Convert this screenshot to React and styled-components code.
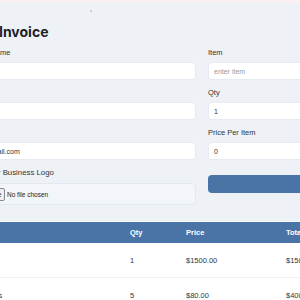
import styled, { createGlobalStyle } from "styled-components";

const GlobalStyle = createGlobalStyle`
  body {
    margin: 0;
    background: #eef2f7;
    font-family: "Liberation Sans", Arial, sans-serif;
    color: #333;
    overflow: hidden;
  }
`;

const Page = styled.div`
  margin-left: -42px;
  width: 500px;
`;

const TopStrip = styled.div`
  height: 3px;
  background: #fbf1f5;
`;

const DotRow = styled.div`
  height: 10px;
  display: flex;
  align-items: center;
  padding-left: 132px;
  margin-top: 3px;
`;

const Dot = styled.span`
  width: 2px;
  height: 2px;
  border-radius: 50%;
  background: #b8bec8;
`;

const Title = styled.h1`
  font-family: Inter, "Liberation Sans", sans-serif;
  font-size: 14px;
  font-weight: 700;
  line-height: 16px;
  color: #1f2328;
  margin: 8px 0 8px -8px;
`;

const FormGrid = styled.div`
  display: grid;
  grid-template-columns: 238px 238px;
  column-gap: 12px;
`;

const Column = styled.div`
  display: flex;
  flex-direction: column;
  gap: 8px;
`;

const Field = styled.div`
  display: flex;
  flex-direction: column;
`;

const Label = styled.label`
  font-size: ${(p) => (p.$big ? "7.8px" : "7.5px")};
  line-height: 9px;
  margin-bottom: ${(p) => (p.$big ? "6px" : "5px")};
  color: #333;
`;

const Input = styled.input`
  box-sizing: border-box;
  height: 18px;
  border: 1px solid #e6ebf1;
  border-radius: 3px;
  background: #fff;
  padding: 0 5px;
  font-family: "Liberation Sans", Arial, sans-serif;
  font-size: 7px;
  color: #333;
  outline: none;

  &::placeholder {
    color: #9a9a9a;
  }
`;

const FileBox = styled.div`
  box-sizing: border-box;
  height: 22px;
  display: flex;
  align-items: center;
  gap: 2px;
  padding: 0 4px;
  border: 1px solid #e3e8ef;
  border-radius: 4px;
  background: #f2f5f9;
`;

const FileButton = styled.span`
  box-sizing: border-box;
  height: 13px;
  width: 42px;
  display: flex;
  align-items: center;
  justify-content: center;
  border: 1px solid #8a8a8a;
  border-radius: 2px;
  background: #efefef;
  font-size: 6.5px;
  color: #222;
`;

const FileText = styled.span`
  font-size: 6.5px;
  color: #222;
`;

const AddButton = styled.button`
  height: 18px;
  margin-top: 7px;
  border: none;
  border-radius: 4px;
  background: #4a74a5;
  color: #fff;
  font-size: 7.5px;
`;

const TableWrap = styled.div`
  margin-top: 16px;
  border-top: 1px solid #f7f9fc;
  background: #fff;
`;

const Row = styled.div`
  display: grid;
  grid-template-columns: 162px 56px 100px 1fr;
  align-items: center;
  height: ${(p) => (p.$head ? "21px" : "34px")};
  background: ${(p) => (p.$head ? "#4a74a5" : "#fff")};
  border-bottom: ${(p) => (p.$head ? "none" : "1px solid #f0f0f0")};
`;

const Cell = styled.div`
  padding-left: 10px;
  font-size: 7.5px;
  font-weight: ${(p) => (p.$head ? 700 : 400)};
  color: ${(p) => (p.$head ? "#fff" : "#333")};
  white-space: nowrap;
`;

const items = [
  { name: "Website", qty: 1, price: "$1500.00", total: "$1500.00" },
  { name: "Brochures", qty: 5, price: "$80.00", total: "$400.00" },
];

export default function App() {
  return (
    <>
      <GlobalStyle />
      <Page>
        <TopStrip />
        <DotRow>
          <Dot />
        </DotRow>
        <Title>Create Invoice</Title>
        <FormGrid>
          <Column>
            <Field>
              <Label>Business Name</Label>
              <Input defaultValue="Smart Tech" />
            </Field>
            <Field>
              <Label>Address</Label>
              <Input defaultValue="" />
            </Field>
            <Field>
              <Label>Email</Label>
              <Input defaultValue="johns@gmail.com" />
            </Field>
            <Field>
              <Label $big>Upload Your Business Logo</Label>
              <FileBox>
                <FileButton>Choose File</FileButton>
                <FileText>No file chosen</FileText>
              </FileBox>
            </Field>
          </Column>
          <Column>
            <Field>
              <Label>Item</Label>
              <Input placeholder="enter item" />
            </Field>
            <Field>
              <Label>Qty</Label>
              <Input defaultValue="1" />
            </Field>
            <Field>
              <Label>Price Per Item</Label>
              <Input defaultValue="0" />
            </Field>
            <AddButton>Add Item</AddButton>
          </Column>
        </FormGrid>
        <TableWrap>
          <Row $head>
            <Cell $head>Item</Cell>
            <Cell $head>Qty</Cell>
            <Cell $head>Price</Cell>
            <Cell $head>Total</Cell>
          </Row>
          {items.map((it) => (
            <Row key={it.name}>
              <Cell>{it.name}</Cell>
              <Cell>{it.qty}</Cell>
              <Cell>{it.price}</Cell>
              <Cell>{it.total}</Cell>
            </Row>
          ))}
        </TableWrap>
      </Page>
    </>
  );
}
